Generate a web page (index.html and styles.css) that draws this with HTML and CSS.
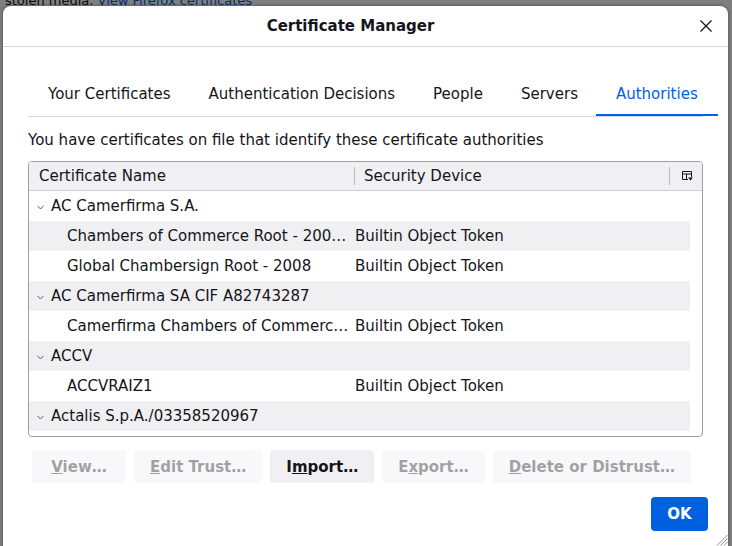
FILE: index.html
```html
<!DOCTYPE html>
<html>
<head>
<meta charset="utf-8">
<link rel="stylesheet" href="styles.css">
</head>
<body>
<div class="page">
  <p class="page-line"><span class="page-text">stolen media.</span> <a class="page-link">View Firefox certificates</a></p>
</div>
<div class="overlay"></div>
<div class="dialog">
  <header class="dlg-head">
    <h1 class="dlg-title">Certificate Manager</h1>
    <button class="close" aria-label="Close">
      <svg width="12" height="12" viewBox="0 0 12 12"><path d="M0.5 0.5L11.5 11.5M11.5 0.5L0.5 11.5" stroke="#15141a" stroke-width="1.3" fill="none"/></svg>
    </button>
  </header>
  <div class="dlg-body">
    <nav class="tabs">
      <div class="tab">Your Certificates</div>
      <div class="tab">Authentication Decisions</div>
      <div class="tab">People</div>
      <div class="tab">Servers</div>
      <div class="tab selected">Authorities</div>
    </nav>
    <p class="desc">You have certificates on file that identify these certificate authorities</p>
    <div class="tree">
      <div class="tree-head">
        <div class="col col-name">Certificate Name</div>
        <div class="col col-dev">Security Device</div>
        <div class="col-pick">
          <svg width="11" height="10" viewBox="0 0 11 10"><path d="M0.5 8.5V0.5H9.5V6M0.5 8.5H6M0.5 3H9.5M4.5 3V8.5" stroke="#15141a" stroke-width="1" fill="none"/><path d="M6 6.5H11L8.5 9.5Z" fill="#15141a"/></svg>
        </div>
      </div>
      <div class="tree-body">
        <div class="row parent"><div class="cell name"><svg class="twisty" width="7" height="5" viewBox="0 0 7 5"><path d="M0.5 0.8L3.5 4L6.5 0.8" stroke="#5b5b66" stroke-width="1" fill="none"/></svg>AC Camerfirma S.A.</div><div class="cell dev"></div></div>
        <div class="row child"><div class="cell name">Chambers of Commerce Root - 200…</div><div class="cell dev">Builtin Object Token</div></div>
        <div class="row child"><div class="cell name">Global Chambersign Root - 2008</div><div class="cell dev">Builtin Object Token</div></div>
        <div class="row parent"><div class="cell name"><svg class="twisty" width="7" height="5" viewBox="0 0 7 5"><path d="M0.5 0.8L3.5 4L6.5 0.8" stroke="#5b5b66" stroke-width="1" fill="none"/></svg>AC Camerfirma SA CIF A82743287</div><div class="cell dev"></div></div>
        <div class="row child"><div class="cell name">Camerfirma Chambers of Commerc…</div><div class="cell dev">Builtin Object Token</div></div>
        <div class="row parent"><div class="cell name"><svg class="twisty" width="7" height="5" viewBox="0 0 7 5"><path d="M0.5 0.8L3.5 4L6.5 0.8" stroke="#5b5b66" stroke-width="1" fill="none"/></svg>ACCV</div><div class="cell dev"></div></div>
        <div class="row child"><div class="cell name">ACCVRAIZ1</div><div class="cell dev">Builtin Object Token</div></div>
        <div class="row parent"><div class="cell name"><svg class="twisty" width="7" height="5" viewBox="0 0 7 5"><path d="M0.5 0.8L3.5 4L6.5 0.8" stroke="#5b5b66" stroke-width="1" fill="none"/></svg>Actalis S.p.A./03358520967</div><div class="cell dev"></div></div>
      </div>
    </div>
    <div class="actions">
      <button class="btn" disabled><u>V</u>iew…</button>
      <button class="btn" disabled><u>E</u>dit Trust…</button>
      <button class="btn">I<u>m</u>port…</button>
      <button class="btn" disabled>E<u>x</u>port…</button>
      <button class="btn" disabled><u>D</u>elete or Distrust…</button>
    </div>
    <div class="footer">
      <button class="ok">OK</button>
    </div>
  </div>
  <svg class="grip" width="12" height="12" viewBox="0 0 12 12"><path d="M11.5 1L1 11.5M11.5 4.5L4.5 11.5M11.5 8L8 11.5" stroke="#8f8f9d" stroke-width="1" fill="none"/></svg>
</div>
</body>
</html>
```

FILE: styles.css
```css
html, body {
  margin: 0;
  padding: 0;
}

body {
  width: 732px;
  height: 546px;
  overflow: hidden;
  position: relative;
  background: #ffffff;
  color: #15141a;
  font-family: "DejaVu Sans", "Noto Sans", sans-serif;
  font-size: 15px;
}

.page-line {
  margin: -8px 0 0 5px;
  font-size: 13px;
  line-height: 18px;
  white-space: nowrap;
}

.page-link {
  color: #0061e0;
}

.overlay {
  position: absolute;
  inset: 0;
  background: rgba(0, 0, 0, 0.5);
}

.dialog {
  position: absolute;
  left: 3px;
  top: 6px;
  width: 725px;
  height: 540px;
  background: #ffffff;
  border-radius: 8px 8px 0 0;
  box-shadow: 0 0 3px 1px rgba(0, 0, 0, 0.25);
  display: flex;
  flex-direction: column;
}

.dlg-head {
  height: 40px;
  flex-shrink: 0;
  border-bottom: 1px solid #d7d7db;
  display: flex;
  align-items: center;
}

.dlg-title {
  flex: 1;
  margin: 0;
  text-align: center;
  font-size: 15px;
  font-weight: bold;
  line-height: 18px;
}

.close {
  width: 16px;
  height: 16px;
  margin-right: 14px;
  padding: 0;
  border: 0;
  background: transparent;
  display: flex;
  align-items: center;
  justify-content: center;
}

.dlg-body {
  flex: 1;
  padding: 0 25px;
  display: flex;
  flex-direction: column;
}

.tabs {
  display: flex;
  margin-top: 23px;
  border-bottom: 1px solid #d7d7db;
}

.tab {
  flex-shrink: 0;
  padding: 15px 20px 11px;
  margin-right: -2px;
  line-height: 18px;
  white-space: nowrap;
  border-bottom: 2px solid transparent;
}

.tab.selected {
  color: #0061e0;
  border-bottom-color: #0061e0;
}

.desc {
  margin: 14px 0 0;
  line-height: 18px;
}

.tree {
  margin-top: 12px;
  height: 276px;
  box-sizing: border-box;
  border: 1px solid #9e9ea6;
  border-radius: 4px;
  overflow: hidden;
  display: flex;
  flex-direction: column;
}

.tree-head {
  height: 28px;
  flex-shrink: 0;
  background: #f0f0f2;
  border-bottom: 1px solid #cfcfd6;
  display: flex;
  align-items: center;
}

.col {
  height: 18px;
  line-height: 18px;
  border-right: 1px solid #b8b8c0;
  white-space: nowrap;
}

.col-name {
  width: 315px;
  padding-left: 10px;
}

.col-dev {
  width: 305px;
  padding-left: 9px;
}

.col-pick {
  flex: 1;
  display: flex;
  justify-content: center;
  padding-left: 2px;
}

.tree-body {
  flex: 1;
  overflow: hidden;
  margin-right: 12px;
}

.row {
  height: 30px;
  display: grid;
  grid-template-columns: 326px 1fr;
  align-items: center;
}

.row:nth-child(even) {
  background: #f0f0f2;
}

.cell {
  white-space: nowrap;
  overflow: hidden;
  line-height: 18px;
}

.row.parent .name {
  display: flex;
  align-items: center;
  padding-left: 8px;
}

.twisty {
  margin: 3px 7px 0 0;
  flex-shrink: 0;
}

.row.child .name {
  padding-left: 38px;
}

.actions {
  display: flex;
  gap: 8px;
  margin: 13px 0 0 4px;
}

.btn {
  height: 33px;
  min-width: 94px;
  padding: 0 16px;
  border: 0;
  border-radius: 4px;
  background: #f0f0f4;
  color: #15141a;
  font-family: "DejaVu Sans", sans-serif;
  font-size: 15px;
  font-weight: bold;
  white-space: nowrap;
}

.btn:disabled {
  opacity: 0.4;
}

.footer {
  display: flex;
  justify-content: flex-end;
  margin: 14px -5px 0 0;
}

.ok {
  height: 34px;
  min-width: 57px;
  padding: 0 14px;
  border: 0;
  border-radius: 4px;
  background: #0061e0;
  color: #ffffff;
  font-family: "DejaVu Sans", sans-serif;
  font-size: 15px;
  font-weight: bold;
}

.grip {
  position: absolute;
  right: 0;
  bottom: 0;
}
```
